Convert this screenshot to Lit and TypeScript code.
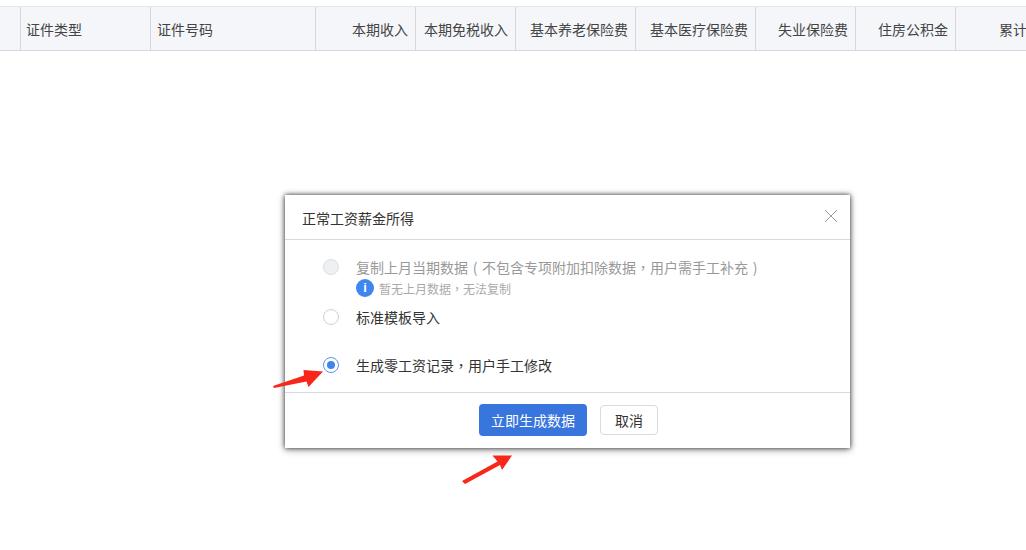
import { LitElement, html, css } from "lit";
import { customElement } from "lit/decorators.js";

const COLS: [string, number, string][] = [
  ["", 21, "l"],
  ["证件类型", 130, "l"],
  ["证件号码", 165, "l wide"],
  ["本期收入", 100, "r"],
  ["本期免税收入", 100, "r"],
  ["基本养老保险费", 120, "r"],
  ["基本医疗保险费", 120, "r"],
  ["失业保险费", 100, "r"],
  ["住房公积金", 100, "r"],
  ["累计", 110, "r2"],
];

@customElement("app-root")
export class AppRoot extends LitElement {
  static styles = css`
    :host {
      display: block;
      position: relative;
      height: 550px;
      overflow: hidden;
      background: #fff;
      font-family: "Noto Sans CJK SC", "Noto Sans", sans-serif;
      font-size: 14px;
      color: #333;
    }
    .thead {
      display: flex;
      margin-top: 6px;
      height: 45px;
      width: 1146px;
      box-sizing: border-box;
      background: #f4f6fa;
      border-top: 1px solid #e3e5ea;
      border-bottom: 1px solid #d5d8de;
    }
    .th {
      box-sizing: border-box;
      flex: none;
      display: flex;
      align-items: center;
      padding: 0 7px 0 5px;
      border-right: 1px solid #d5d8de;
      white-space: nowrap;
      line-height: 20px;
      color: #444;
    }
    .th.wide { padding-left: 6px; }
    .th.r { justify-content: flex-end; }
    .th.r2 { padding-left: 43px; }
    .dialog {
      position: absolute;
      left: 285px;
      top: 195px;
      width: 565px;
      height: 253px;
      box-sizing: border-box;
      display: flex;
      flex-direction: column;
      background: #fff;
      box-shadow: 0 0 5px rgba(0, 0, 0, 0.8), 0 2px 8px rgba(0, 0, 0, 0.25);
    }
    .head {
      flex: none;
      height: 45px;
      box-sizing: border-box;
      display: flex;
      align-items: center;
      justify-content: space-between;
      padding: 2px 12px 0 17px;
      border-bottom: 1px solid #d8d9df;
      color: #333;
    }
    .close { display: block; margin-top: -5px; }
    .body {
      flex: 1;
      display: flex;
      flex-direction: column;
      padding: 0 0 0 38px;
    }
    .opt {
      display: flex;
      align-items: center;
      gap: 17px;
      height: 20px;
      line-height: 20px;
      white-space: nowrap;
    }
    .first { margin-top: 17px; color: #999; }
    .second { margin-top: 10px; }
    .third { margin-top: 28px; }
    .punct { font-family: "Noto Sans CJK TC", sans-serif; }
    .paren { display: inline-block; width: 14px; text-align: center; }
    .radio {
      flex: none;
      width: 16px;
      height: 16px;
      box-sizing: border-box;
      border-radius: 50%;
      border: 1px solid #cfd1d6;
      background: #fff;
      display: flex;
      align-items: center;
      justify-content: center;
    }
    .radio.off { background: #eef0f4; border-color: #dcdee3; }
    .radio.on { border-color: #5a93ee; }
    .dot { width: 8px; height: 8px; border-radius: 50%; background: #3f86f0; }
    .hint {
      display: flex;
      align-items: center;
      gap: 5px;
      margin: 2px 0 0 33px;
      height: 18px;
      font-size: 12px;
      color: #aaa;
      white-space: nowrap;
    }
    .info {
      flex: none;
      width: 18px;
      height: 18px;
      border-radius: 50%;
      background: #3f86f0;
      color: #fff;
      font: bold 13px/18px "Liberation Sans", sans-serif;
      text-align: center;
    }
    .foot {
      flex: none;
      height: 56px;
      box-sizing: border-box;
      border-top: 1px solid #d8d9df;
      display: flex;
      align-items: flex-start;
      justify-content: flex-start;
      gap: 13px;
      padding: 11px 0 0 194px;
    }
    .btn {
      box-sizing: border-box;
      font: inherit;
      display: flex;
      align-items: center;
      justify-content: center;
      padding: 0;
    }
    .primary {
      width: 108px;
      height: 32px;
      background: #3875dd;
      color: #fff;
      border: none;
      border-radius: 4px;
    }
    .ghost {
      width: 58px;
      height: 30px;
      margin-top: 1px;
      background: #fff;
      color: #333;
      border: 1px solid #d9dbe0;
      border-radius: 4px;
    }
    .arrows {
      position: absolute;
      left: 0;
      top: 0;
      pointer-events: none;
    }
  `;

  render() {
    return html`
      <div class="thead">
        ${COLS.map(
          ([t, w, a]) =>
            html`<div class="th ${a}" style="width:${w}px">${t}</div>`
        )}
      </div>
      <div class="dialog">
        <div class="head">
          <span>正常工资薪金所得</span>
          <svg class="close" width="14" height="14" viewBox="0 0 14 14">
            <path d="M1 1L13 13M13 1L1 13" stroke="#9a9a9a" stroke-width="1" fill="none" />
          </svg>
        </div>
        <div class="body">
          <div class="opt first"><span class="radio off"></span><span>复制上月当期数据<span class="paren">(</span>不包含专项附加扣除数据<span class="punct">，</span>用户需手工补充<span class="paren">)</span></span></div>
          <div class="hint"><span class="info">i</span><span>暂无上月数据<span class="punct">，</span>无法复制</span></div>
          <div class="opt second"><span class="radio"></span><span>标准模板导入</span></div>
          <div class="opt third"><span class="radio on"><span class="dot"></span></span><span>生成零工资记录<span class="punct">，</span>用户手工修改</span></div>
        </div>
        <div class="foot">
          <button class="btn primary">立即生成数据</button>
          <button class="btn ghost">取消</button>
        </div>
      </div>
      <svg class="arrows" width="1026" height="550" viewBox="0 0 1026 550">
        <path d="M273 386L304 375.5L303.5 370L323 371.5L308.5 387L306.5 381.5L274 388Z" fill="#f7281a" />
        <path d="M462 481L497.5 461.5L492.5 455.5L512 455.5L502 470L500 465L465 484Z" fill="#f7281a" />
      </svg>
    `;
  }
}
